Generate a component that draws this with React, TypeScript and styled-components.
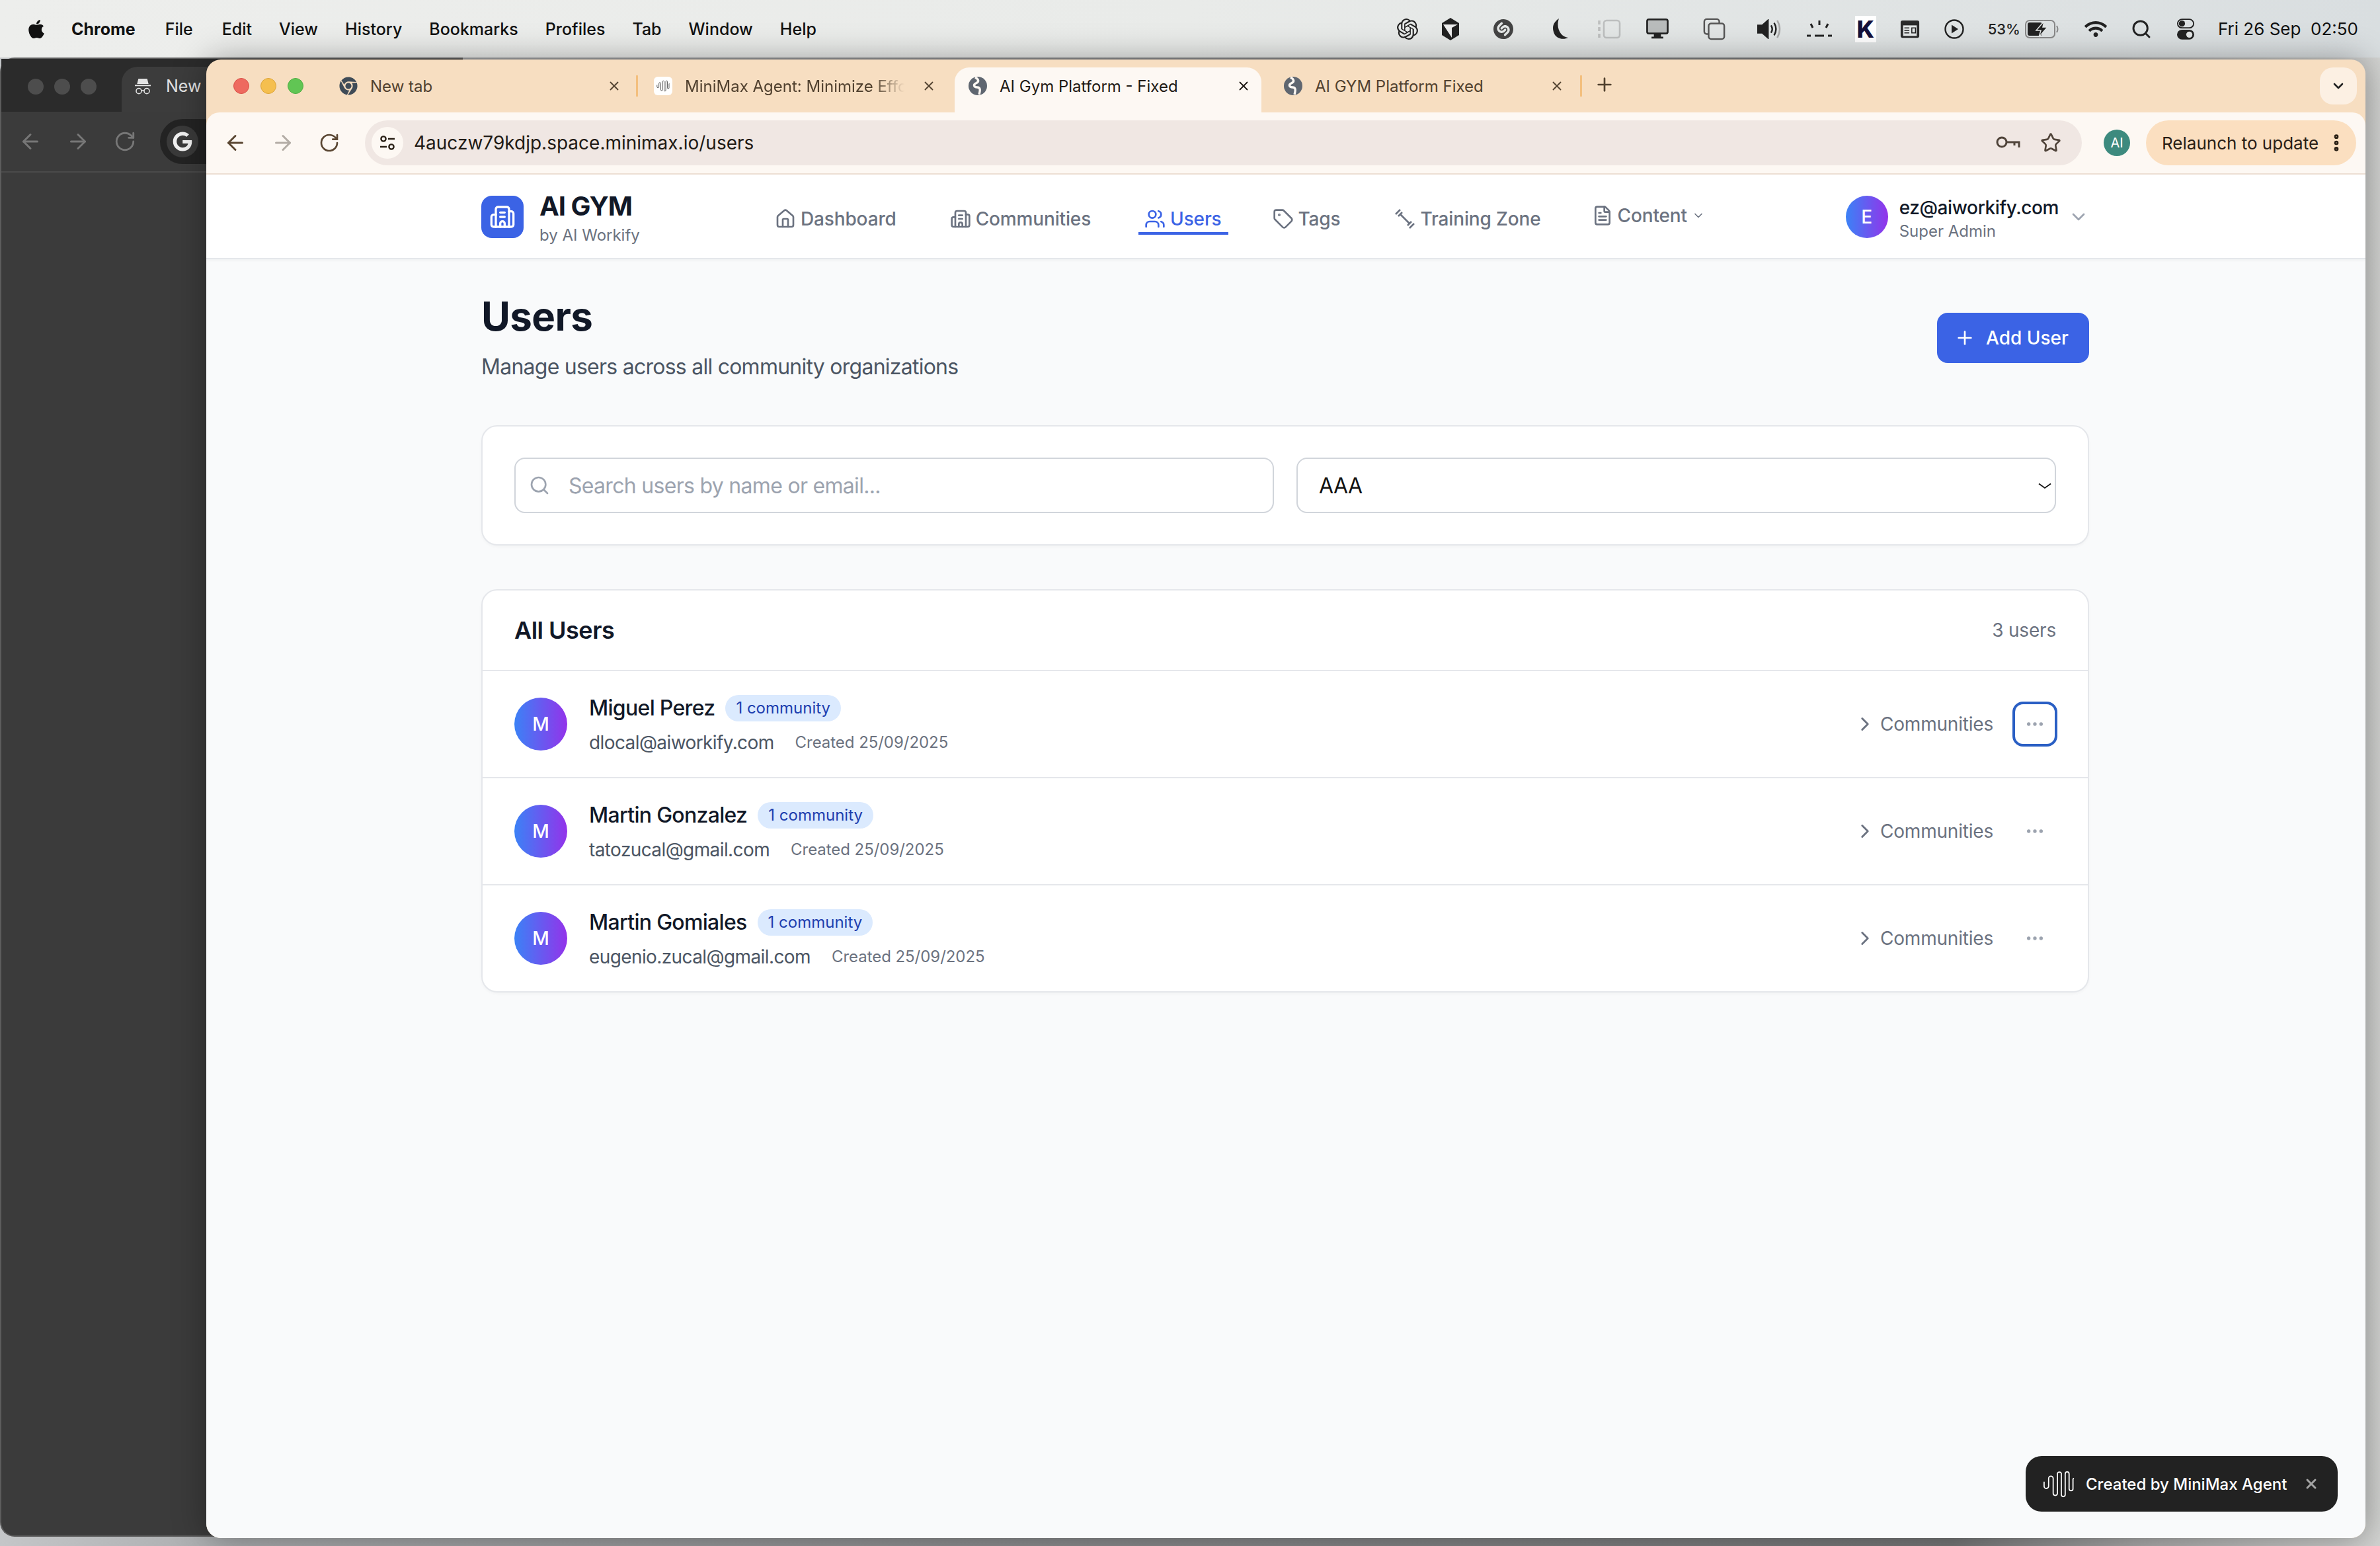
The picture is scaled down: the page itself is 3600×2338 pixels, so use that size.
import React from 'react';
import styled, { createGlobalStyle } from 'styled-components';
import {
  ArrowLeft,
  ArrowRight,
  Building2,
  ChevronDown,
  ChevronRight,
  EllipsisVertical,
  FileText,
  House,
  MoreHorizontal,
  Plus,
  RotateCw,
  Search,
  Star,
  Tag,
  Users,
  X,
} from 'lucide-react';
import { FaApple, FaChrome, FaGoogle, FaWifi } from 'react-icons/fa';
import { SiOpenai, SiShazam } from 'react-icons/si';

const GlobalStyle = createGlobalStyle`
  html, body {
    margin: 0;
    width: 3600px;
    height: 2338px;
    overflow: hidden;
    font-family: Inter, "Liberation Sans", sans-serif;
  }
  * { box-sizing: border-box; }
`;

const Desktop = styled.div`
  position: relative;
  width: 3600px;
  height: 2338px;
  overflow: hidden;
  background: linear-gradient(90deg, #c4c6c8 0%, #a9abad 10%, #8d8e90 40%, #757677 82%, #aaaaaa 90%, #d2d3d1 100%);
`;

const MenuBar = styled.div`
  height: 87px;
  display: flex;
  align-items: center;
  padding: 0 33px 0 39px;
  font-size: 25px;
  font-weight: 500;
  color: #111;
  background: linear-gradient(90deg, #edeeec 0%, #e9ebe9 50%, #d9dee0 100%);
`;

const MenuList = styled.div`
  display: flex;
  align-items: center;
  gap: 41px;
  margin-left: 37px;
  flex: 1;
`;

const MenuTitle = styled.span`
  font-weight: 700;
  margin-right: 4px;
`;

const FirstMenu = styled.span`
  margin-right: 3px;
`;

const StatusSlot = styled.div<{ $w: number; $ml?: number }>`
  width: ${(p) => p.$w}px;
  margin-left: ${(p) => p.$ml ?? 0}px;
  display: flex;
  justify-content: center;
  align-items: center;
  color: #222;
`;

const BatteryText = styled.span`
  font-size: 22px;
  margin-left: 21px;
  color: #222;
`;

const ClockText = styled.span`
  margin-left: 16px;
  font-size: 26px;
  font-weight: 400;
  white-space: pre;
`;

const KBox = styled.span`
  width: 32px;
  height: 40px;
  background: #fff;
  color: #14103a;
  font-size: 36px;
  font-weight: 800;
  line-height: 40px;
  text-align: center;
`;

/* the incognito window lying behind */
const BackWindow = styled.div`
  position: absolute;
  left: 0;
  top: 87px;
  width: 700px;
  height: 2237px;
  border-radius: 22px 0 0 22px;
  border: 2px solid #5c5c5c;
  border-right: 0;
  background: #3b3b3b;
`;

const BackStrip = styled.div`
  height: 80px;
  display: flex;
  background: #2b2b2b;
  padding-top: 12px;
`;

const BackLights = styled.div`
  width: 182px;
  display: flex;
  gap: 16px;
  padding: 18px 0 0 40px;
`;

const BackLight = styled.span`
  width: 24px;
  height: 24px;
  border-radius: 50%;
  background: #4d4d4d;
`;

const BackTab = styled.div`
  flex: 1;
  display: flex;
  align-items: flex-start;
  gap: 19px;
  padding: 14px 0 0 16px;
  border-radius: 24px 0 0 0;
  background: #3c3c3c;
  color: #e2e2e2;
  font-size: 25px;
`;

const BackToolbar = styled.div`
  height: 92px;
  display: flex;
  align-items: center;
  gap: 36px;
  padding-left: 26px;
  color: #777;
  border-bottom: 2px solid #4a4a4a;
`;

const BackOmni = styled.div`
  width: 300px;
  height: 68px;
  display: flex;
  align-items: center;
  padding-left: 10px;
  border-radius: 34px;
  background: #232323;
`;

const BackG = styled.div`
  width: 48px;
  height: 48px;
  display: flex;
  align-items: center;
  justify-content: center;
  border-radius: 50%;
  background: #3a3a3a;
  color: #f2f2f2;
`;

const BrowserWindow = styled.div`
  position: absolute;
  left: 312px;
  top: 90px;
  width: 3266px;
  height: 2236px;
  display: flex;
  flex-direction: column;
  overflow: hidden;
  border-radius: 22px;
  background: #f7dec1;
  box-shadow: 0 0 50px rgba(0, 0, 0, 0.35);
`;

const TabStrip = styled.div`
  height: 80px;
  flex: none;
  display: flex;
  align-items: flex-start;
  padding-top: 12px;
  position: relative;
`;

const Lights = styled.div`
  width: 177px;
  height: 56px;
  display: flex;
  align-items: center;
  gap: 17px;
  padding-left: 41px;
`;

const Light = styled.span<{ $c: string; $b: string }>`
  width: 24px;
  height: 24px;
  border-radius: 50%;
  background: ${(p) => p.$c};
  border: 1px solid ${(p) => p.$b};
`;

const TabItem = styled.div<{ $w: number; $left: number; $right: number; $active?: boolean }>`
  width: ${(p) => p.$w}px;
  height: ${(p) => (p.$active ? 68 : 56)}px;
  display: flex;
  align-items: center;
  gap: 19px;
  padding: ${(p) => (p.$active ? '0 0 12px' : '0')};
  padding-left: ${(p) => p.$left}px;
  padding-right: ${(p) => p.$right}px;
  font-size: 24px;
  color: ${(p) => (p.$active ? '#1f1a15' : '#51412f')};
  background: ${(p) => (p.$active ? '#fdf8f3' : 'transparent')};
  border-radius: 22px 22px 0 0;
`;

const TabLabel = styled.span<{ $fade?: boolean }>`
  flex: 1;
  white-space: nowrap;
  ${(p) => p.$fade && 'mask-image: linear-gradient(90deg, #000 84%, transparent 98%);'}
`;

const TabSep = styled.span<{ $ml?: number }>`
  width: 3px;
  height: 32px;
  margin: 12px 0 0 ${(p) => p.$ml ?? 2}px;
  background: #f3bf7e;
`;

const NewTab = styled.span`
  margin: 10px 0 0 18px;
  color: #51412f;
  display: flex;
`;

const TabListButton = styled.div`
  position: absolute;
  right: 13px;
  top: 12px;
  width: 56px;
  height: 56px;
  display: flex;
  align-items: center;
  justify-content: center;
  border-radius: 20px;
  background: #fcf0e3;
  color: #222;
`;

const FaviconBox = styled.span`
  width: 28px;
  height: 28px;
  flex: none;
  display: flex;
  align-items: center;
  justify-content: center;
  color: #3f4b57;
`;

const WaveFavicon = styled(FaviconBox)`
  background: #fff;
  border-radius: 6px;
  color: #222;
`;

const Toolbar = styled.div`
  height: 94px;
  flex: none;
  display: flex;
  align-items: center;
  padding: 0 13px 0 26px;
  background: #fdf8f3;
  border-bottom: 2px solid #eddfd3;
  border-radius: 20px 20px 0 0;
`;

const ToolButton = styled.span<{ $faded?: boolean; $w?: number }>`
  width: ${(p) => p.$w ?? 72}px;
  display: flex;
  justify-content: flex-start;
  color: ${(p) => (p.$faded ? '#b3aca5' : '#5a4632')};
`;

const UrlBar = styled.div`
  width: 2597px;
  height: 68px;
  margin-left: -2px;
  display: flex;
  align-items: center;
  padding: 0 31px 0 10px;
  border-radius: 34px;
  background: #f0e7e3;
  color: #1f1a15;
  font-size: 28px;
`;

const SiteIcon = styled.span`
  width: 48px;
  height: 48px;
  flex: none;
  display: flex;
  align-items: center;
  justify-content: center;
  margin-right: 16px;
  border-radius: 50%;
  background: #fdf8f3;
`;

const UrlText = styled.span`
  flex: 1;
`;

const UrlActions = styled.div`
  display: flex;
  align-items: center;
  gap: 30px;
  color: #4f4339;
`;

const ProfileDot = styled.span`
  width: 40px;
  height: 40px;
  margin: 0 24px 0 33px;
  display: flex;
  align-items: center;
  justify-content: center;
  border-radius: 50%;
  background: #3d8a7e;
  color: #fff;
  font-size: 20px;
`;

const RelaunchPill = styled.div`
  width: 318px;
  height: 68px;
  display: flex;
  align-items: center;
  justify-content: space-between;
  padding: 0 14px 0 24px;
  border-radius: 34px;
  background: #fbdfc0;
  color: #2a2016;
  font-size: 26px;
`;

const Page = styled.div`
  flex: 1;
  background: #f9fafb;
  display: flex;
  flex-direction: column;
  min-height: 0;
`;

const TopNav = styled.header`
  height: 128px;
  flex: none;
  display: flex;
  align-items: center;
  padding: 2px 418px 0 416px;
  background: #fff;
  border-bottom: 2px solid #e5e7eb;
  box-shadow: 0 2px 4px rgba(0, 0, 0, 0.04);
`;

const Brand = styled.div`
  width: 438px;
  display: flex;
  align-items: center;
  gap: 24px;
`;

const LogoTile = styled.div`
  width: 64px;
  height: 64px;
  display: flex;
  align-items: center;
  justify-content: center;
  border-radius: 16px;
  background: #3b63e5;
  color: #fff;
`;

const BrandText = styled.div`
  display: flex;
  flex-direction: column;
  margin-top: 8px;
`;

const BrandTitle = styled.div`
  font-size: 40px;
  line-height: 44px;
  font-weight: 700;
  letter-spacing: -1px;
  color: #111827;
`;

const BrandSub = styled.div`
  font-size: 24px;
  line-height: 36px;
  margin-top: 4px;
  color: #6b7280;
`;

const NavList = styled.nav`
  display: flex;
  align-items: flex-start;
  gap: 65px;
  margin-top: 6px;
`;

const NavItem = styled.a<{ $active?: boolean; $raised?: boolean; $ml?: number }>`
  height: 48px;
  display: flex;
  align-items: center;
  gap: 7px;
  padding: 4px ${(p) => (p.$active ? 10 : 8)}px 0 ${(p) => (p.$active ? 9 : 6)}px;
  margin-top: ${(p) => (p.$raised ? -5 : 0)}px;
  margin-left: ${(p) => p.$ml ?? 0}px;
  border-bottom: 4px solid ${(p) => (p.$active ? '#3b63e5' : 'transparent')};
  font-size: 28px;
  font-weight: 500;
  letter-spacing: -0.15px;
  white-space: nowrap;
  color: ${(p) => (p.$active ? '#3b63e5' : '#6b7280')};
`;

const UserMenu = styled.div`
  margin-left: auto;
  display: flex;
  align-items: center;
  color: #9ca3af;
`;

const GradientAvatar = styled.div<{ $size: number }>`
  width: ${(p) => p.$size}px;
  height: ${(p) => p.$size}px;
  flex: none;
  display: flex;
  align-items: center;
  justify-content: center;
  border-radius: 50%;
  color: #fff;
  font-size: 28px;
  font-weight: 500;
  background: linear-gradient(90deg, #3b82f6, #9333ea);
`;

const UserText = styled.div`
  display: flex;
  flex-direction: column;
  margin: 8px 14px 0 17px;
`;

const UserEmail = styled.div`
  font-size: 28px;
  line-height: 36px;
  font-weight: 500;
  letter-spacing: -0.4px;
  color: #111827;
`;

const UserRole = styled.div`
  font-size: 24px;
  line-height: 36px;
  color: #6b7280;
`;

const Main = styled.main`
  padding: 50px 418px 0 416px;
`;

const PageHeader = styled.div`
  display: flex;
  align-items: center;
  justify-content: space-between;
`;

const PageTitle = styled.h1`
  margin: 0;
  font-size: 60px;
  line-height: 72px;
  font-weight: 700;
  letter-spacing: -0.6px;
  color: #111827;
`;

const PageSub = styled.p`
  margin: 17px 0 0;
  font-size: 32px;
  line-height: 48px;
  letter-spacing: -0.75px;
  color: #4b5563;
`;

const AddButton = styled.button`
  width: 230px;
  height: 76px;
  display: flex;
  align-items: center;
  gap: 16px;
  padding: 0 0 0 26px;
  border: 0;
  border-radius: 16px;
  background: #3b63e5;
  color: #fff;
  font-family: inherit;
  font-size: 28px;
  font-weight: 500;
`;

const Card = styled.section`
  background: #fff;
  border: 2px solid #e5e7eb;
  border-radius: 24px;
  box-shadow: 0 2px 4px rgba(0, 0, 0, 0.03);
`;

const FilterCard = styled(Card)`
  margin-top: 64px;
  padding: 47px 48px;
  display: grid;
  grid-template-columns: 1fr 1fr;
  gap: 34px;
`;

const FieldWrap = styled.div`
  position: relative;
  color: #9ca3af;
`;

const SearchGlyph = styled.span`
  position: absolute;
  left: 22px;
  top: 26px;
  display: flex;
  color: #9ca3af;
`;

const SelectCaret = styled.svg`
  position: absolute;
  right: 7px;
  top: 38px;
`;

const SearchInput = styled.input`
  width: 100%;
  height: 84px;
  padding: 0 32px 0 80px;
  border: 2px solid #d1d5db;
  border-radius: 16px;
  font-family: inherit;
  font-size: 32px;
  letter-spacing: -0.7px;
  color: #111827;
  background: #fff;
  &::placeholder { color: #9ca3af; opacity: 1; }
`;

const FilterSelect = styled.select`
  width: 100%;
  height: 84px;
  padding: 0 32px;
  border: 2px solid #d1d5db;
  border-radius: 16px;
  font-family: inherit;
  font-size: 32px;
  letter-spacing: -0.6px;
  color: #111;
  background: #fff;
  appearance: none;
`;

const UsersCard = styled(Card)`
  margin-top: 66px;
  overflow: hidden;
`;

const CardHeader = styled.div`
  height: 120px;
  display: flex;
  align-items: center;
  justify-content: space-between;
  padding: 0 48px;
`;

const CardTitle = styled.h2`
  margin: 0;
  font-size: 36px;
  font-weight: 600;
  letter-spacing: -0.5px;
  color: #111827;
`;

const CountText = styled.span`
  font-size: 28px;
  letter-spacing: -0.2px;
  color: #6b7280;
`;

const UserRowBox = styled.div`
  height: 162px;
  display: flex;
  align-items: center;
  padding: 0 46px 0 48px;
  border-top: 2px solid #e5e7eb;
`;

const RowInfo = styled.div`
  flex: 1;
  margin-left: 33px;
  padding-top: 3px;
`;

const NameLine = styled.div`
  display: flex;
  align-items: center;
  gap: 16px;
  height: 40px;
`;

const UserName = styled.span`
  font-size: 32px;
  font-weight: 500;
  letter-spacing: -0.7px;
  color: #111827;
`;

const CommunityBadge = styled.span`
  height: 40px;
  display: flex;
  align-items: center;
  padding: 0 16px;
  border-radius: 20px;
  background: #dbeafe;
  color: #1e40af;
  font-size: 24px;
`;

const MetaLine = styled.div`
  display: flex;
  align-items: center;
  gap: 32px;
  height: 40px;
  margin-top: 12px;
`;

const RowEmail = styled.span`
  font-size: 28px;
  letter-spacing: -0.6px;
  color: #4b5563;
`;

const RowDate = styled.span`
  font-size: 24px;
  letter-spacing: -0.05px;
  color: #6b7280;
`;

const CommunitiesToggle = styled.div`
  display: flex;
  align-items: center;
  gap: 6px;
  margin-right: 29px;
  font-size: 28px;
  letter-spacing: -0.2px;
  color: #6b7280;
`;

const DotsButton = styled.div<{ $focused?: boolean }>`
  width: 68px;
  height: 68px;
  display: flex;
  align-items: center;
  justify-content: center;
  border-radius: 16px;
  border: 4px solid ${(p) => (p.$focused ? '#2a5fc4' : 'transparent')};
  color: #9ca3af;
`;

const AgentToast = styled.div`
  position: absolute;
  right: 42px;
  bottom: 40px;
  width: 472px;
  height: 84px;
  display: flex;
  align-items: center;
  gap: 17px;
  padding: 0 28px 0 26px;
  border-radius: 24px;
  background: #222;
  color: #fff;
  font-size: 24px;
  font-weight: 500;
`;

const ToastLabel = styled.span`
  flex: 1;
  white-space: nowrap;
`;

const WaveMark = ({ size = 48 }: { size?: number }) => (
  <svg width={size} height={size * 0.86} viewBox="0 0 48 42" fill="none" stroke="currentColor" strokeWidth="1.8">
    <path d="M1.5 18v7a3.5 3.5 0 0 0 7 0V13a3.5 3.5 0 0 1 7 0v23a3 3 0 0 0 6.5 0V5a3.5 3.5 0 0 1 6 0v33a3 3 0 0 0 6 0V6a3 3 0 0 1 6 0v23a3 3 0 0 0 6 0V14a2 2 0 0 1 1.5-1" />
  </svg>
);

const GlobeIcon = () => (
  <svg width="28" height="28" viewBox="0 0 28 28">
    <circle cx="14" cy="14" r="14" fill="#5f6670" />
    <path d="M10 1c6 3 6 7 1 9-4 2-3 6 2 6 5 0 5 4 3 11" fill="none" stroke="#fdf8f3" strokeWidth="3.4" />
  </svg>
);

const TuneIcon = () => (
  <svg width="28" height="28" viewBox="0 0 28 28" fill="none" stroke="#2a2016" strokeWidth="2.4">
    <circle cx="8" cy="8" r="3.6" />
    <path d="M15 8h10M3 20h10" />
    <circle cx="20" cy="20" r="3.6" />
  </svg>
);

const KeyIcon = () => (
  <svg width="38" height="28" viewBox="0 0 38 28" fill="none" stroke="currentColor" strokeWidth="3">
    <circle cx="10" cy="13" r="7" />
    <path d="M17 13h19v8M29 13v5" />
  </svg>
);

// diagonal bar with small hatched ends, as the Training Zone item has it
const TrainingIcon = () => (
  <svg width="32" height="32" viewBox="0 0 32 32" fill="none" stroke="currentColor" strokeWidth="2.6">
    <path d="M9 9 23 23" />
    <path d="M2 9 9 2M6 12l6-6M20 26l6-6M23 30l7-7" />
  </svg>
);

const IncognitoIcon = () => (
  <svg width="32" height="32" viewBox="0 0 24 24" fill="currentColor">
    <path d="M7 3h10l1.5 6h-13zM3 10h18v1.4H3z" />
    <g fill="none" stroke="currentColor" strokeWidth="1.2">
      <circle cx="7.5" cy="17" r="3" />
      <circle cx="16.5" cy="17" r="3" />
      <path d="M10.5 16.5h3" />
    </g>
  </svg>
);

const CubeIcon = () => (
  <svg width="28" height="34" viewBox="0 0 28 34">
    <path d="M14 0 27 8v18L14 34 1 26V8z" fill="#222" />
    <path d="M3 10h22l-9 5v15z" fill="#eee" />
  </svg>
);

const SidebarIcon = () => (
  <svg width="36" height="30" viewBox="0 0 36 30" fill="none" stroke="#bdbfbf" strokeWidth="2.6">
    <rect x="10" y="2" width="24" height="26" rx="4" />
    <path d="M3 2v6M3 12v6M3 22v6" strokeWidth="3.6" />
  </svg>
);

const DisplayIcon = () => (
  <svg width="34" height="32" viewBox="0 0 38 36">
    <rect x="1.5" y="1.5" width="35" height="24" rx="3" fill="#b9bcbc" stroke="#222" strokeWidth="3" />
    <path d="M13 26h12v5h4v3H9v-3h4z" fill="#222" />
  </svg>
);

const WindowsIcon = () => (
  <svg width="34" height="34" viewBox="0 0 36 36" fill="none" stroke="#555" strokeWidth="2.6">
    <rect x="2" y="2" width="24" height="24" rx="4" />
    <rect x="9" y="9" width="25" height="25" rx="4" fill="#e2e5e5" />
  </svg>
);

const VolumeIcon = () => (
  <svg width="38" height="30" viewBox="0 0 40 32" fill="none" stroke="#222" strokeWidth="2.6">
    <path d="M1 10h7L17 2v28l-9-8H1z" fill="#222" />
    <path d="M22 10q4 6 0 12M27 6q6 10 0 20" />
    <path d="M32 2q8 14 0 28" stroke="#aaa" />
  </svg>
);

const BrightnessIcon = () => (
  <svg width="40" height="28" viewBox="0 0 40 28" fill="none" stroke="#222" strokeWidth="3">
    <path d="M20 1v7M7 6l3 6M33 6l-3 6M1 24h6M13 24h14M33 24h6" />
  </svg>
);

const CommandIcon = () => (
  <svg width="30" height="30" viewBox="0 0 32 32">
    <rect x="1" y="2" width="30" height="28" rx="3" fill="#2a2a2a" />
    <path d="M5 10h22v17H5z" fill="#e4e7e7" />
    <path d="M7 14h8M7 18h8M7 22h8M19 14h6v8h-6z" stroke="#222" strokeWidth="1.6" fill="none" />
  </svg>
);

const PlayCircleIcon = () => (
  <svg width="30" height="30" viewBox="0 0 30 30">
    <circle cx="15" cy="15" r="13.5" fill="none" stroke="#222" strokeWidth="2.4" />
    <path d="M11 8.5 21 15l-10 6.5z" fill="#222" />
  </svg>
);

const BatteryIcon = () => (
  <svg width="52" height="28" viewBox="0 0 52 28">
    <rect x="1" y="1" width="44" height="26" rx="6" fill="none" stroke="#888" strokeWidth="2" />
    <rect x="4" y="4" width="22" height="20" rx="3" fill="#222" />
    <path d="M48 9q3 5 0 10" fill="none" stroke="#888" strokeWidth="2" />
    <path d="M29 2 17 16h7l-3 10 13-15h-7z" fill="#222" stroke="#e2e5e5" strokeWidth="1.5" />
  </svg>
);

const ControlIcon = () => (
  <svg width="26" height="32" viewBox="0 0 28 34">
    <rect x="1" y="1" width="26" height="14" rx="7" fill="none" stroke="#222" strokeWidth="2" />
    <circle cx="8" cy="8" r="5" fill="#222" />
    <rect x="0" y="18" width="28" height="16" rx="8" fill="#222" />
    <circle cx="20" cy="26" r="5" fill="#e2e5e5" />
  </svg>
);

const statusItems: { w: number; node: React.ReactNode }[] = [
  { w: 66, node: <SiOpenai size={32} /> },
  { w: 64, node: <CubeIcon /> },
  { w: 96, node: <SiShazam size={30} color="#444" /> },
  {
    w: 76,
    node: (
      <svg width="26" height="32" viewBox="0 0 26 32">
        <path d="M11 0C2 6 0 14 4 23c3 7 13 10 21 6C14 28 6 15 11 0z" fill="#222" />
      </svg>
    ),
  },
  { w: 72, node: <SidebarIcon /> },
  { w: 74, node: <DisplayIcon /> },
  { w: 98, node: <WindowsIcon /> },
  { w: 70, node: <VolumeIcon /> },
  { w: 80, node: <BrightnessIcon /> },
  { w: 60, node: <KBox>K</KBox> },
  { w: 74, node: <CommandIcon /> },
  { w: 60, node: <PlayCircleIcon /> },
];

const menuItems = ['Edit', 'View', 'History', 'Bookmarks', 'Profiles', 'Tab', 'Window', 'Help'];

const navItems: { label: string; icon: React.ReactNode; active?: boolean; ml?: number }[] = [
  { label: 'Dashboard', icon: <House size={32} /> },
  { label: 'Communities', icon: <Building2 size={32} />, ml: 2 },
  { label: 'Users', icon: <Users size={32} />, active: true, ml: -1 },
  { label: 'Tags', icon: <Tag size={32} />, ml: -4 },
  { label: 'Training Zone', icon: <TrainingIcon />, ml: 3 },
];

const users = [
  { name: 'Miguel Perez', email: 'dlocal@aiworkify.com', focused: true },
  { name: 'Martin Gonzalez', email: 'tatozucal@gmail.com' },
  { name: 'Martin Gomiales', email: 'eugenio.zucal@gmail.com' },
];

const UserRow = ({ name, email, focused }: { name: string; email: string; focused?: boolean }) => (
  <UserRowBox>
    <GradientAvatar $size={80}>M</GradientAvatar>
    <RowInfo>
      <NameLine>
        <UserName>{name}</UserName>
        <CommunityBadge>1 community</CommunityBadge>
      </NameLine>
      <MetaLine>
        <RowEmail>{email}</RowEmail>
        <RowDate>Created 25/09/2025</RowDate>
      </MetaLine>
    </RowInfo>
    <CommunitiesToggle>
      <ChevronRight size={34} />
      Communities
    </CommunitiesToggle>
    <DotsButton $focused={focused}>
      <MoreHorizontal size={32} />
    </DotsButton>
  </UserRowBox>
);

const App: React.FC = () => (
  <Desktop>
    <GlobalStyle />
    <MenuBar>
      <FaApple size={32} />
      <MenuList>
        <MenuTitle>Chrome</MenuTitle>
        <FirstMenu>File</FirstMenu>
        {menuItems.map((m) => (
          <span key={m}>{m}</span>
        ))}
      </MenuList>
      {statusItems.map((s, i) => (
        <StatusSlot key={i} $w={s.w}>
          {s.node}
        </StatusSlot>
      ))}
      <BatteryText>53%</BatteryText>
      <StatusSlot $w={66}>
        <BatteryIcon />
      </StatusSlot>
      <StatusSlot $w={70} $ml={13}>
        <FaWifi size={34} />
      </StatusSlot>
      <StatusSlot $w={68}>
        <Search size={32} strokeWidth={2.2} />
      </StatusSlot>
      <StatusSlot $w={66}>
        <ControlIcon />
      </StatusSlot>
      <ClockText>Fri 26 Sep  02:50</ClockText>
    </MenuBar>

    <BackWindow>
      <BackStrip>
        <BackLights>
          <BackLight />
          <BackLight />
          <BackLight />
        </BackLights>
        <BackTab>
          <IncognitoIcon />
          New Incognito Tab
        </BackTab>
      </BackStrip>
      <BackToolbar>
        <ArrowLeft size={36} />
        <ArrowRight size={36} />
        <RotateCw size={34} />
        <BackOmni>
          <BackG>
            <FaGoogle size={30} />
          </BackG>
        </BackOmni>
      </BackToolbar>
    </BackWindow>

    <BrowserWindow>
      <TabStrip>
        <Lights>
          <Light $c="#ee6a5f" $b="#d9534a" />
          <Light $c="#f5bf4f" $b="#dca53a" />
          <Light $c="#61c554" $b="#4fae43" />
        </Lights>
        <TabItem $w={471} $left={24} $right={20}>
          <FaviconBox>
            <FaChrome size={28} />
          </FaviconBox>
          <TabLabel>New tab</TabLabel>
          <X size={22} />
        </TabItem>
        <TabSep />
        <TabItem $w={479} $left={24} $right={28}>
          <WaveFavicon>
            <WaveMark size={20} />
          </WaveFavicon>
          <TabLabel $fade>MiniMax Agent: Minimize Effo</TabLabel>
          <X size={22} />
        </TabItem>
        <TabItem $w={464} $left={21} $right={16} $active>
          <FaviconBox>
            <GlobeIcon />
          </FaviconBox>
          <TabLabel>AI Gym Platform - Fixed</TabLabel>
          <X size={22} />
        </TabItem>
        <TabItem $w={479} $left={34} $right={21}>
          <FaviconBox>
            <GlobeIcon />
          </FaviconBox>
          <TabLabel>AI GYM Platform Fixed</TabLabel>
          <X size={22} />
        </TabItem>
        <TabSep $ml={3} />
        <NewTab>
          <Plus size={32} />
        </NewTab>
        <TabListButton>
          <ChevronDown size={24} strokeWidth={2.6} />
        </TabListButton>
      </TabStrip>

      <Toolbar>
        <ToolButton>
          <ArrowLeft size={36} />
        </ToolButton>
        <ToolButton $faded>
          <ArrowRight size={36} />
        </ToolButton>
        <ToolButton>
          <RotateCw size={32} />
        </ToolButton>
        <UrlBar>
          <SiteIcon>
            <TuneIcon />
          </SiteIcon>
          <UrlText>4auczw79kdjp.space.minimax.io/users</UrlText>
          <UrlActions>
            <KeyIcon />
            <Star size={32} />
          </UrlActions>
        </UrlBar>
        <ProfileDot>AI</ProfileDot>
        <RelaunchPill>
          Relaunch to update
          <EllipsisVertical size={32} strokeWidth={3} />
        </RelaunchPill>
      </Toolbar>

      <Page>
        <TopNav>
          <Brand>
            <LogoTile>
              <Building2 size={40} />
            </LogoTile>
            <BrandText>
              <BrandTitle>AI GYM</BrandTitle>
              <BrandSub>by AI Workify</BrandSub>
            </BrandText>
          </Brand>
          <NavList>
            {navItems.map((n) => (
              <NavItem key={n.label} $active={n.active} $ml={n.ml}>
                {n.icon}
                {n.label}
              </NavItem>
            ))}
            <NavItem $raised $ml={-2}>
              <FileText size={32} />
              Content
              <ChevronDown size={20} />
            </NavItem>
          </NavList>
          <UserMenu>
            <GradientAvatar $size={64}>E</GradientAvatar>
            <UserText>
              <UserEmail>ez@aiworkify.com</UserEmail>
              <UserRole>Super Admin</UserRole>
            </UserText>
            <ChevronDown size={32} />
          </UserMenu>
        </TopNav>

        <Main>
          <PageHeader>
            <div>
              <PageTitle>Users</PageTitle>
              <PageSub>Manage users across all community organizations</PageSub>
            </div>
            <AddButton>
              <Plus size={32} />
              Add User
            </AddButton>
          </PageHeader>

          <FilterCard>
            <FieldWrap>
              <SearchGlyph>
                <Search size={32} />
              </SearchGlyph>
              <SearchInput placeholder="Search users by name or email..." />
            </FieldWrap>
            <FieldWrap>
              <FilterSelect defaultValue="AAA">
                <option value="AAA">AAA</option>
              </FilterSelect>
              <SelectCaret width="20" height="10" viewBox="0 0 20 10" fill="none" stroke="#111" strokeWidth="1.8">
                <path d="M1 1.5 10 8l9-6.5" />
              </SelectCaret>
            </FieldWrap>
          </FilterCard>

          <UsersCard>
            <CardHeader>
              <CardTitle>All Users</CardTitle>
              <CountText>3 users</CountText>
            </CardHeader>
            {users.map((u) => (
              <UserRow key={u.email} name={u.name} email={u.email} focused={u.focused} />
            ))}
          </UsersCard>
        </Main>
      </Page>

      <AgentToast>
        <WaveMark size={48} />
        <ToastLabel>Created by MiniMax Agent</ToastLabel>
        <X size={24} color="#a3a3a3" strokeWidth={3} />
      </AgentToast>
    </BrowserWindow>
  </Desktop>
);

export default App;
